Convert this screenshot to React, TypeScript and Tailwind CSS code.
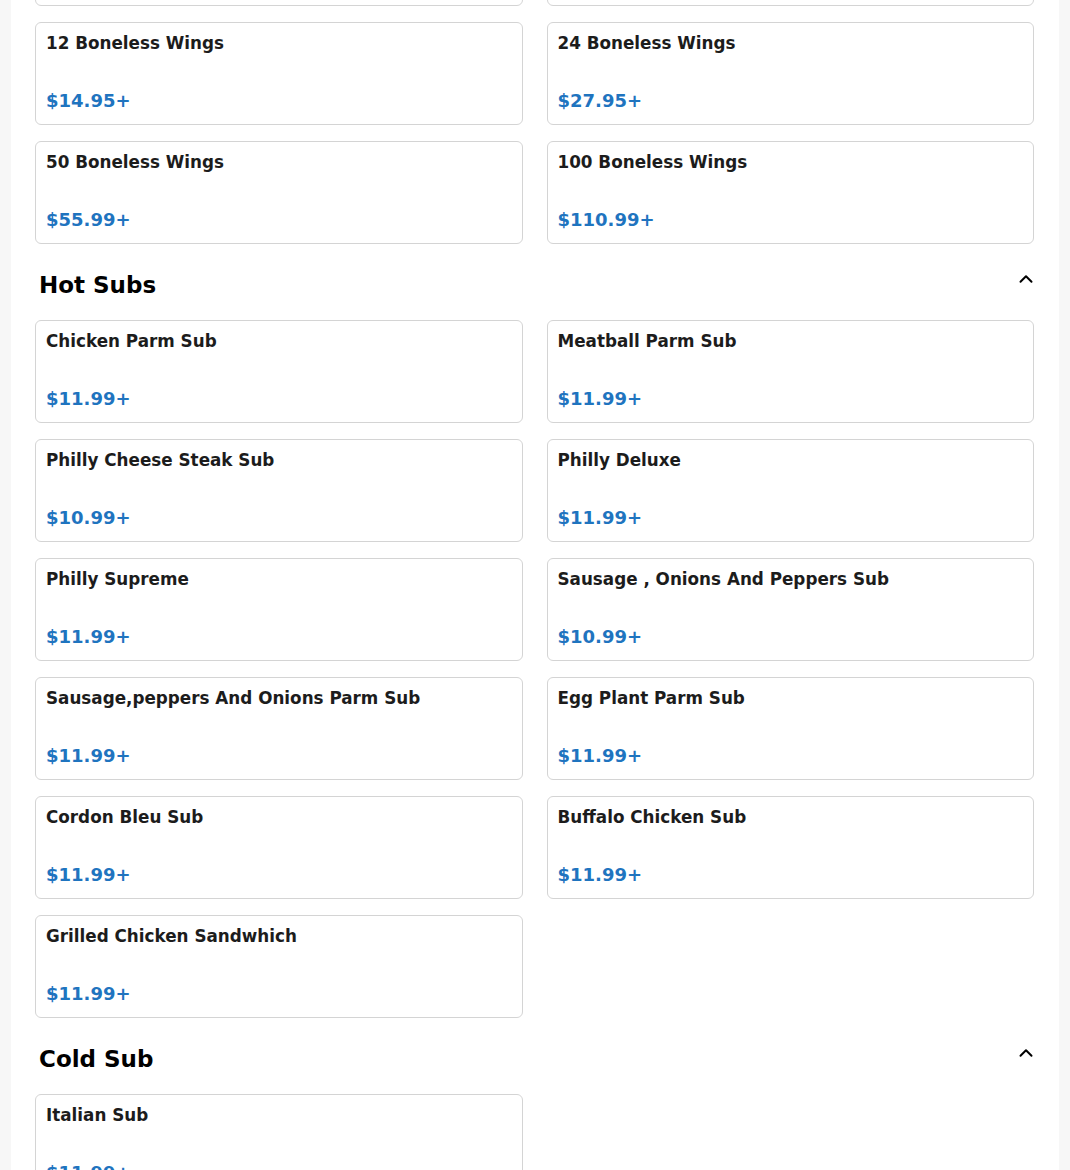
import React from "react";
import { ChevronUp } from "lucide-react";

type Item = { name: string; price: string };

const wings: Item[] = [
  { name: "6 Boneless Wings", price: "$7.95+" },
  { name: "10 Boneless Wings", price: "$12.95+" },
  { name: "12 Boneless Wings", price: "$14.95+" },
  { name: "24 Boneless Wings", price: "$27.95+" },
  { name: "50 Boneless Wings", price: "$55.99+" },
  { name: "100 Boneless Wings", price: "$110.99+" },
];

const hotSubs: Item[] = [
  { name: "Chicken Parm Sub", price: "$11.99+" },
  { name: "Meatball Parm Sub", price: "$11.99+" },
  { name: "Philly Cheese Steak Sub", price: "$10.99+" },
  { name: "Philly Deluxe", price: "$11.99+" },
  { name: "Philly Supreme", price: "$11.99+" },
  { name: "Sausage , Onions And Peppers Sub", price: "$10.99+" },
  { name: "Sausage,peppers And Onions Parm Sub", price: "$11.99+" },
  { name: "Egg Plant Parm Sub", price: "$11.99+" },
  { name: "Cordon Bleu Sub", price: "$11.99+" },
  { name: "Buffalo Chicken Sub", price: "$11.99+" },
  { name: "Grilled Chicken Sandwhich", price: "$11.99+" },
];

const coldSubs: Item[] = [{ name: "Italian Sub", price: "$11.99+" }];

function Card({ item }: { item: Item }) {
  return (
    <div className="h-[103px] border border-[#d4d4d4] rounded-md bg-white px-[10px] pt-[8px] pb-[10px] flex flex-col justify-between">
      <div className="text-[16.8px] leading-[25px] font-bold text-[#1c1c1c]">{item.name}</div>
      <div className="text-[18px] leading-[27px] font-bold text-[#1f74bf]">{item.price}</div>
    </div>
  );
}

function Grid({ items }: { items: Item[] }) {
  return (
    <div className="grid grid-cols-2 gap-x-[24px] gap-y-[16px]">
      {items.map((it) => (
        <Card key={it.name} item={it} />
      ))}
    </div>
  );
}

function Header({ title }: { title: string }) {
  return (
    <div className="flex items-start justify-between pl-[4px] mt-[25px] mb-[18px]">
      <h2 className="text-[23px] leading-[33px] font-bold text-black">{title}</h2>
      <ChevronUp className="w-[22px] h-[22px] -mt-[1px] -mr-[3px] text-black" strokeWidth={2.2} />
    </div>
  );
}

export default function App() {
  return (
    <div
      className="h-[1170px] overflow-hidden bg-[#f7f7f7]"
      style={{ fontFamily: '"DejaVu Sans", "Noto Sans", sans-serif' }}
    >
      <div className="mx-[11px] min-h-[1300px] bg-white pl-[24px] pr-[25px]">
        <div className="-mt-[97px]">
          <Grid items={wings} />
          <Header title="Hot Subs" />
          <Grid items={hotSubs} />
          <Header title="Cold Sub" />
          <Grid items={coldSubs} />
        </div>
      </div>
    </div>
  );
}
